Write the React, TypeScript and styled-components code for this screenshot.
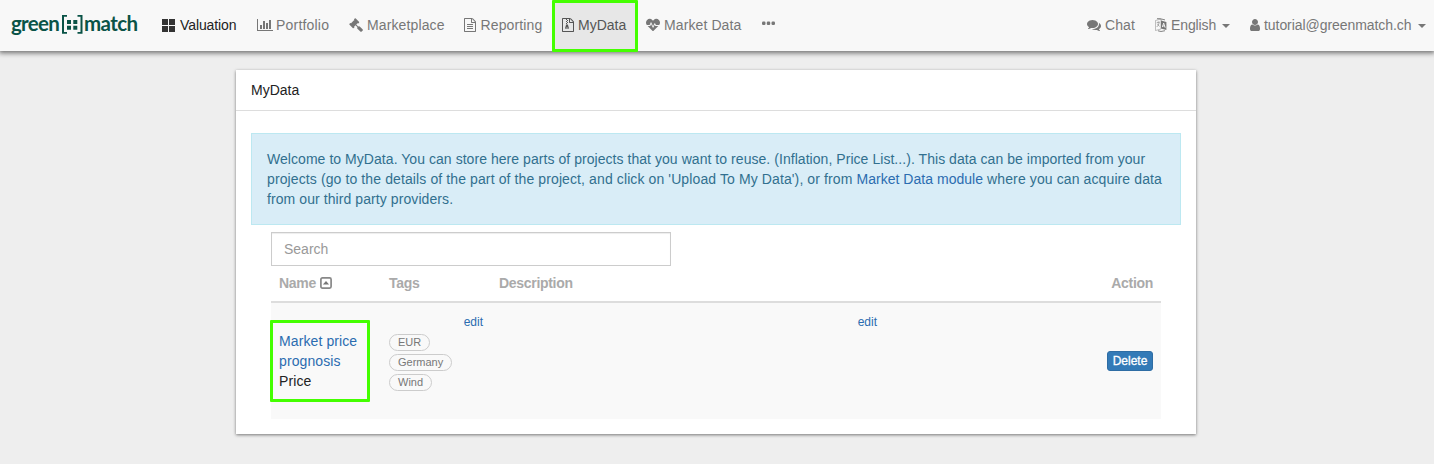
import React from "react";
import styled, { createGlobalStyle } from "styled-components";
import { FaHeartbeat } from "react-icons/fa";

const GlobalStyle = createGlobalStyle`
  * { box-sizing: border-box; }
  body {
    margin: 0;
    min-height: 464px;
    background: #eee;
    color: #222;
    font: 14px/20px "Helvetica Neue", "Liberation Sans", Arial, sans-serif;
    overflow: hidden;
  }
`;

const Navbar = styled.header`
  display: flex;
  height: 51px;
  background: #f8f8f8;
  box-shadow: 0 1px 5px 1px rgba(0, 0, 0, 0.55);
`;

const Brand = styled.a`
  display: flex;
  width: 152px;
  height: 50px;
  padding: 10px 0 0 11px;
  color: #0a5347;
  font: 700 20.5px/26px Lato, sans-serif;
`;

const BrandWord = styled.span<{ $w: number; $ls: number }>`
  width: ${(p) => p.$w}px;
  letter-spacing: ${(p) => p.$ls}px;
  white-space: nowrap;
`;

const BrandMark = styled.svg`
  flex: none;
  width: 21px;
  height: 20px;
  margin: 5px 1px 0 0;
`;

const NavList = styled.nav<{ $end?: boolean }>`
  display: flex;
  margin-left: ${(p) => (p.$end ? "auto" : "0")};
`;

const NavItem = styled.a<{ $w: number; $state?: "current" | "open" }>`
  position: relative;
  display: flex;
  align-items: center;
  width: ${(p) => p.$w}px;
  height: 51px;
  padding: 0 0 1px 10px;
  white-space: nowrap;
  color: ${(p) => (p.$state === "current" ? "#222" : p.$state === "open" ? "#555" : "#777")};
  background: ${(p) => (p.$state === "open" ? "#e7e7e7" : "transparent")};
`;

const NavIcon = styled.span<{ $w: number; $lift?: number }>`
  display: flex;
  width: ${(p) => p.$w}px;
  padding-bottom: ${(p) => p.$lift ?? 0}px;
  svg { display: block; flex: none; }
`;

const Label = styled.span<{ $ls?: number }>`
  letter-spacing: ${(p) => p.$ls ?? 0}px;
`;

const Caret = styled.span`
  margin-left: 6px;
  margin-top: 2px;
  border: 4px solid transparent;
  border-top-color: #777;
  border-bottom: 0;
`;

const Highlight = styled.span<{ $box: string }>`
  position: absolute;
  inset: ${(p) => p.$box};
  border: 3px solid #4f0;
  border-radius: 1px;
  pointer-events: none;
`;

const Card = styled.main`
  width: 960px;
  height: 364px;
  margin: 19px 0 0 236px;
  background: #fff;
  box-shadow: 0 1px 3px rgba(0, 0, 0, 0.5);
`;

const CardTitle = styled.h1`
  height: 41px;
  margin: 0;
  padding: 10px 15px;
  border-bottom: 1px solid #ddd;
  font-size: 14px;
  font-weight: 400;
`;

const CardBody = styled.div`
  padding: 22px 15px 0;
`;

const Notice = styled.div`
  height: 92px;
  padding: 15px;
  border: 1px solid #bce8f1;
  background: #d9edf7;
  color: #31708f;
`;

const NoticeLine = styled.div<{ $ls: number }>`
  white-space: nowrap;
  letter-spacing: ${(p) => p.$ls}px;
`;

const Link = styled.a<{ $small?: boolean; $ls?: number }>`
  color: #2b6cb0;
  font-size: ${(p) => (p.$small ? 12 : 14)}px;
  letter-spacing: ${(p) => (p.$ls === undefined ? "inherit" : `${p.$ls}px`)};
`;

const Content = styled.section`
  padding: 7px 20px 0;
`;

const Search = styled.input`
  display: block;
  width: 400px;
  height: 34px;
  padding: 6px 12px;
  border: 1px solid #ccc;
  border-radius: 0;
  box-shadow: inset 0 1px 1px rgba(0, 0, 0, 0.075);
  font: inherit;
  &::placeholder { color: #999; opacity: 1; }
`;

const columns = "110px 110px 394px 1fr";

const HeadRow = styled.div`
  display: grid;
  grid-template-columns: ${columns};
  height: 37px;
  padding-top: 7px;
  border-bottom: 2px solid #ddd;
  color: #aaa;
  font-weight: 700;
  letter-spacing: -0.3px;
`;

const HeadCell = styled.div<{ $end?: boolean }>`
  display: flex;
  gap: 4px;
  align-items: center;
  height: 20px;
  padding: 0 8px;
  justify-content: ${(p) => (p.$end ? "flex-end" : "flex-start")};
`;

const Row = styled.div`
  display: grid;
  grid-template-columns: ${columns};
  height: 116px;
  background: #f9f9f9;
`;

const NameCell = styled.div`
  position: relative;
  padding: 28px 8px 0;
  letter-spacing: 0.1px;
`;

const TagsCell = styled.div`
  padding: 9px 0 0 8px;
`;

const EditLine = styled.div`
  display: flex;
  justify-content: flex-end;
  height: 20px;
  padding-right: 8px;
  line-height: 20px;
`;

const Tag = styled.div`
  width: fit-content;
  height: 17px;
  margin: 2px 0 3px;
  padding: 0 8px;
  border: 1px solid #ccc;
  border-radius: 9px;
  color: #777;
  font-size: 11px;
  line-height: 15px;
`;

const DescriptionCell = styled.div`
  padding: 9px 0 0;
`;

const ActionCell = styled.div`
  display: flex;
  justify-content: flex-end;
  align-items: center;
  padding-right: 8px;
`;

const DeleteButton = styled.button`
  width: 46px;
  height: 20px;
  padding: 0;
  border: 1px solid #2e6da4;
  border-radius: 3px;
  background: #337ab7;
  color: #fff;
  font: 12px/17px "Liberation Sans", Arial, sans-serif;
  -webkit-text-stroke: 0.3px #fff;
`;

const filePath =
  "M1596 380q28 28 48 76t20 88v1152q0 40-28 68t-68 28h-1344q-40 0-68-28t-28-68v-1600q0-40 28-68t68-28h896q40 0 88 20t76 48zm-444-244v376h376q-10-29-22-41l-313-313q-12-12-41-22zm384 1528v-1024h-416q-40 0-68-28t-28-68v-416h-768v1536h1280z";

const Glyph = ({ d, w = 14, box = "0 0 1792 1792" }: { d: string; w?: number; box?: string }) => (
  <svg width={w} height="14" viewBox={box} fill="currentColor">
    <path d={d} />
  </svg>
);

const ChartIcon = () => (
  <Glyph w={16} box="0 0 2048 1792" d="M640 896v512h-256v-512h256zm384-512v1024h-256v-1024h256zm1024 1152v128h-2048v-1536h128v1408h1920zm-640-896v768h-256v-768h256zm384-384v1152h-256v-1152h256z" />
);
const GavelIcon = () => (
  <Glyph d="M1771 1536q0 53-37 90l-107 108q-39 37-91 37-53 0-90-37l-363-364q-38-36-38-90 0-53 43-96l-256-256-126 126q-14 14-34 14t-34-14q2 2 12.5 12t12.5 13 10 11.5 10 13.5 6 13.5 5.5 16.5 1.5 18q0 38-28 68-3 3-16.5 18t-19 20.5-18.5 16.5-22 15.5-22 9-26 4.5q-40 0-68-28l-408-408q-28-28-28-68 0-13 4.5-26t9-22 15.5-22 16.5-18.5 20.5-19 18-16.5q30-28 68-28 10 0 18 1.5t16.5 5.5 13.5 6 13.5 10 11.5 10 13 12.5 12 12.5q-14-14-14-34t14-34l348-348q14-14 34-14t34 14q-2-2-12.5-12t-12.5-13-10-11.5-10-13.5-6-13.5-5.5-16.5-1.5-18q0-38 28-68 3-3 16.5-18t19-20.5 18.5-16.5 22-15.5 22-9 26-4.5q40 0 68 28l408 408q28 28 28 68 0 13-4.5 26t-9 22-15.5 22-16.5 18.5-20.5 19-18 16.5q-30 28-68 28-10 0-18-1.5t-16.5-5.5-13.5-6-13.5-10-11.5-10-13-12.5-12-12.5q14 14 14 34t-14 34l-126 126 256 256q43-43 96-43 52 0 91 37l363 363q37 39 37 91z" />
);
const ReportIcon = () => (
  <Glyph w={12} box="128 0 1536 1792" d={filePath + "M512 800q0-14 9-23t23-9h704q14 0 23 9t9 23v64q0 14-9 23t-23 9h-704q-14 0-23-9t-9-23v-64zm736 224q14 0 23 9t9 23v64q0 14-9 23t-23 9h-704q-14 0-23-9t-9-23v-64q0-14 9-23t23-9h704zm0 256q14 0 23 9t9 23v64q0 14-9 23t-23 9h-704q-14 0-23-9t-9-23v-64q0-14 9-23t23-9h704z"} />
);
const ArchiveIcon = () => (
  <Glyph w={12} box="128 0 1536 1792" d={filePath + "M640 128h128v128h-128zM768 256h128v128h-128zM640 384h128v128h-128zM768 512h128v128h-128zM640 640h128v128h-128zM704 768h128v128h64l107 349q21 66-38 117t-197 54-197-54-38-117l107-349h64zM768 1216q-128 0-128 64t128 64 128-64-128-64z"} />
);
const PersonIcon = () => (
  <Glyph w={10} box="256 0 1280 1792" d="M1536 1399q0 109-62.5 187t-150.5 78h-854q-88 0-150.5-78t-62.5-187q0-85 8.5-160.5t31.5-152 58.5-131 94-89 134.5-34.5q131 128 313 128t313-128q76 0 134.5 34.5t94 89 58.5 131 31.5 152 8.5 160.5zm-256-887q0 159-112.5 271.5t-271.5 112.5-271.5-112.5-112.5-271.5 112.5-271.5 271.5-112.5 271.5 112.5 112.5 271.5z" />
);
const CommentsIcon = () => (
  <Glyph d="M1408 768q0 139-94 257t-256.5 186.5-353.5 68.5q-86 0-176-16-124 88-278 128-36 9-86 16h-3q-11 0-20.5-8t-11.5-21q-1-3-1-6.5t.5-6.5 2-6l2.5-5 3.5-5.5 4-5 4.5-5 4-4.5q5-6 23-25t26-29.5 22.5-29 25-38.5 20.5-44q-124-72-195-177t-71-224q0-139 94-257t256.5-186.5 353.5-68.5 353.5 68.5 256.5 186.5 94 257zm384 256q0 120-71 224.5t-195 176.5q10 24 20.5 44t25 38.5 22.5 29 26 29.5 23 25q1 1 4 4.5t4.5 5 4 5 3.5 5.5l2.5 5 2 6 .5 6.5-1 6.5q-3 14-13 22t-22 7q-50-7-86-16-154-40-278-128-90 16-176 16-271 0-472-132 58 4 88 4 161 0 309-45t264-129q125-92 192-212t67-254q0-77-23-152 129 71 204 178t75 230z" />
);
const TilesIcon = () => (
  <svg width="13" height="13" viewBox="0 0 13 13" fill="#333">
    <path d="M0 0h6v6H0zM7 0h6v6H7zM0 7h6v6H0zM7 7h6v6H7z" />
  </svg>
);
const LanguageIcon = () => (
  <svg width="12" height="14" viewBox="0 0 12 14" fill="none" stroke="currentColor">
    <path d="M.5 2.5 6 1v10L.5 12.5z" strokeWidth=".6" opacity=".75" />
    <path d="M1.6 4.8 4.8 4M3.2 3.5v1M4.3 4.4Q3.7 7.5 1.7 9M2.2 6l2.4 2.4" strokeWidth=".6" />
    <path d="M2 .7h3l5 1.2M3 12.8l3 .7 4-.8" strokeWidth=".9" />
    <path d="m6 2.5 5.4 1.4v8L6 10.6z" fill="currentColor" stroke="none" />
    <path d="m7.3 9.1 1.4-4 1.5 4.6M7.8 7.8l1.9.4" stroke="#f8f8f8" strokeWidth=".9" />
  </svg>
);
const DotsIcon = () => (
  <svg width="13" height="5" viewBox="0 0 13 5" fill="currentColor">
    <rect x="0" y=".5" width="3.5" height="3.5" rx="1.2" />
    <rect x="4.75" y=".5" width="3.5" height="3.5" rx="1.2" />
    <rect x="9.5" y=".5" width="3.5" height="3.5" rx="1.2" />
  </svg>
);
const SortIcon = () => (
  <svg width="12" height="12" viewBox="0 0 12 12">
    <rect x=".9" y=".9" width="10.2" height="10.2" rx="1.5" fill="none" stroke="#888" strokeWidth="1.7" />
    <path d="M2.9 7.6 6 4l3.1 3.6z" fill="#777" />
  </svg>
);

export default function App() {
  return (
    <>
      <GlobalStyle />
      <Navbar>
        <Brand>
          <BrandWord $w={51} $ls={-0.7}>green</BrandWord>
          <BrandMark viewBox="0 0 21 20" fill="#0a5347">
            <path d="M0 0h5v1.8H2V17h3v1.8H0zM15.5 0h5v18.8h-5V17h3V1.8h-3zM5 5h4v4H5zM11.3 5h4v4h-4zM5 10.8h4v4H5zM11.3 10.8h4v4h-4z" />
          </BrandMark>
          <BrandWord $w={54} $ls={-0.6}>match</BrandWord>
        </Brand>
        <NavList>
          <NavItem $w={95} $state="current"><NavIcon $w={18}><TilesIcon /></NavIcon><Label $ls={-0.1}>Valuation</Label></NavItem>
          <NavItem $w={92}><NavIcon $w={19}><ChartIcon /></NavIcon><Label $ls={0.2}>Portfolio</Label></NavItem>
          <NavItem $w={115}><NavIcon $w={18}><GavelIcon /></NavIcon><Label $ls={0.12}>Marketplace</Label></NavItem>
          <NavItem $w={98}><NavIcon $w={16.5}><ReportIcon /></NavIcon><Label $ls={0.12}>Reporting</Label></NavItem>
          <NavItem $w={84} $state="open">
            <NavIcon $w={16}><ArchiveIcon /></NavIcon><Label>MyData</Label>
            <Highlight $box="0 -2px -1px 0" />
          </NavItem>
          <NavItem $w={116}><NavIcon $w={18}><FaHeartbeat size={14} /></NavIcon><Label $ls={0.1}>Market Data</Label></NavItem>
          <NavItem $w={40}><NavIcon $w={14} $lift={3}><DotsIcon /></NavIcon></NavItem>
        </NavList>
        <NavList $end>
          <NavItem $w={68}><NavIcon $w={18}><CommentsIcon /></NavIcon><Label $ls={0.1}>Chat</Label></NavItem>
          <NavItem $w={95}><NavIcon $w={16}><LanguageIcon /></NavIcon><Label $ls={-0.12}>English</Label><Caret /></NavItem>
          <NavItem $w={194}><NavIcon $w={14}><PersonIcon /></NavIcon><Label $ls={-0.06}>tutorial@greenmatch.ch</Label><Caret /></NavItem>
        </NavList>
      </Navbar>
      <Card>
        <CardTitle>MyData</CardTitle>
        <CardBody>
          <Notice>
            <NoticeLine $ls={0.05}>Welcome to MyData. You can store here parts of projects that you want to reuse. (Inflation, Price List...). This data can be imported from your</NoticeLine>
            <NoticeLine $ls={0.11}>projects (go to the details of the part of the project, and click on 'Upload To My Data'), or from <Link $ls={0.03}>Market Data module</Link> where you can acquire data</NoticeLine>
            <NoticeLine $ls={0.08}>from our third party providers.</NoticeLine>
          </Notice>
          <Content>
            <Search placeholder="Search" />
            <HeadRow>
              <HeadCell>Name <SortIcon /></HeadCell>
              <HeadCell>Tags</HeadCell>
              <HeadCell>Description</HeadCell>
              <HeadCell $end>Action</HeadCell>
            </HeadRow>
            <Row>
              <NameCell>
                <Link>Market price<br />prognosis</Link><br />Price
                <Highlight $box="17px 11px 17px -1px" />
              </NameCell>
              <TagsCell>
                <EditLine><Link $small>edit</Link></EditLine>
                <Tag>EUR</Tag><Tag>Germany</Tag><Tag>Wind</Tag>
              </TagsCell>
              <DescriptionCell><EditLine><Link $small>edit</Link></EditLine></DescriptionCell>
              <ActionCell><DeleteButton>Delete</DeleteButton></ActionCell>
            </Row>
          </Content>
        </CardBody>
      </Card>
    </>
  );
}
